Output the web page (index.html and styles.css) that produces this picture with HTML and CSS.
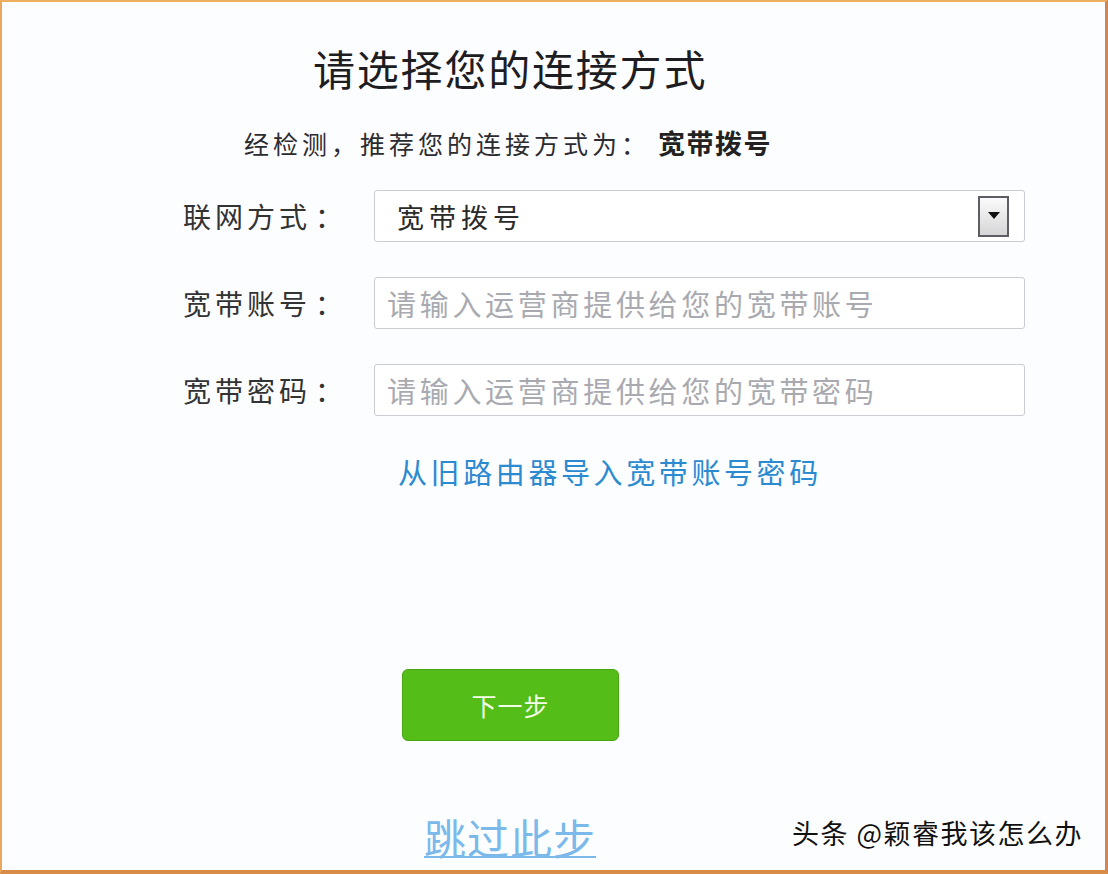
FILE: index.html
```html
<!DOCTYPE html>
<html lang="zh-CN">
<head>
    <meta charset="UTF-8">
    <meta name="viewport" content="width=device-width, initial-scale=1.0">
    <title>连接方式</title>
    <link rel="stylesheet" href="styles.css">
</head>
<body>
    <div class="frame">
        <h1 class="title">请选择您的连接方式</h1>
        <p class="hint">经检测，推荐您的连接方式为：<b>宽带拨号</b></p>

        <div class="form">
            <label class="label">联网方式<span class="colon">：</span></label>
            <div class="select">
                <span>宽带拨号</span>
                <span class="select-arrow"></span>
            </div>

            <label class="label">宽带账号<span class="colon">：</span></label>
            <input class="field" type="text" placeholder="请输入运营商提供给您的宽带账号">

            <label class="label">宽带密码<span class="colon">：</span></label>
            <input class="field" type="text" placeholder="请输入运营商提供给您的宽带密码">
        </div>

        <a class="import-link" href="#">从旧路由器导入宽带账号密码</a>

        <button class="next-btn">下一步</button>

        <a class="skip-link" href="#">跳过此步</a>

        <div class="watermark">头条 @颖睿我该怎么办</div>
    </div>
</body>
</html>
```

FILE: styles.css
```css
* {
    box-sizing: border-box;
}

body {
    margin: 0;
    background-color: #fcfdff;
    font-family: "Noto Sans CJK SC", "Noto Sans", sans-serif;
}

.frame {
    position: relative;
    height: 874px;
    display: flex;
    flex-direction: column;
    align-items: flex-start;
    padding-left: 181px;
    background-color: #fcfdff;
    border-top: 2px solid #eeae62;
    border-left: 2px solid #eaa75c;
    border-right: 3px solid #cf8654;
    border-bottom: 4px solid #d98c48;
}

.title {
    margin: 40px 0 0 130px;
    font-size: 42px;
    line-height: 52px;
    font-weight: normal;
    color: #1e1e22;
    letter-spacing: 1.8px;
}

.hint {
    margin: 32px 0 0 61px;
    font-size: 25px;
    line-height: 34px;
    color: #2c2c30;
    letter-spacing: 4px;
}

.hint b {
    margin-left: 8px;
    font-size: 27px;
    letter-spacing: 1.5px;
    color: #222;
}

/* form grid */
.form {
    margin-top: 30px;
    display: grid;
    grid-template-columns: 191px 651px;
    grid-auto-rows: 52px;
    row-gap: 35px;
    align-items: center;
}

.label {
    font-size: 28px;
    line-height: 52px;
    color: #333;
    letter-spacing: 4px;
}

.colon {
    margin-left: 4px;
}

.select,
.field {
    height: 52px;
    width: 651px;
    border: 1px solid #c9ccd2;
    border-radius: 3px;
    background-color: #fff;
    font-family: inherit;
}

.select {
    display: flex;
    align-items: center;
    justify-content: space-between;
    padding: 0 15px 0 22px;
    font-size: 27px;
    letter-spacing: 5px;
    color: #2a2a2a;
}

.select-arrow {
    position: relative;
    width: 31px;
    height: 41px;
    border: 2px solid #5d5d66;
    background: linear-gradient(#fbfbfb, #d6d6d8);
}

.select-arrow::after {
    content: "";
    position: absolute;
    left: 8px;
    top: 14px;
    border-left: 6px solid transparent;
    border-right: 6px solid transparent;
    border-top: 7px solid #111;
}

.field {
    padding: 0 12px;
    font-size: 29px;
    letter-spacing: 3.7px;
    color: #333;
    outline: none;
}

.field::placeholder {
    color: #a9aab0;
}

.import-link {
    margin: 37px 0 0 215px;
    font-size: 29px;
    line-height: 36px;
    letter-spacing: 3.6px;
    color: #2b8ad0;
    text-decoration: none;
}

.next-btn {
    margin: 180px 0 0 219px;
    width: 217px;
    height: 72px;
    border: 1px solid #4aa616;
    border-radius: 6px;
    background-color: #55bd17;
    color: #f3ffe6;
    font-family: inherit;
    font-size: 25px;
    letter-spacing: 1px;
    cursor: pointer;
}

.skip-link {
    margin: 72px 0 0 241px;
    font-size: 42px;
    line-height: 48px;
    letter-spacing: 1px;
    color: #7ab9ea;
    text-decoration: underline;
    text-decoration-thickness: 2px;
}

.watermark {
    position: absolute;
    right: 22px;
    bottom: 18px;
    font-size: 27px;
    letter-spacing: 1.5px;
    color: #111;
    text-shadow: 1px 1px 1px #fff, -1px -1px 1px #fff;
}
```
